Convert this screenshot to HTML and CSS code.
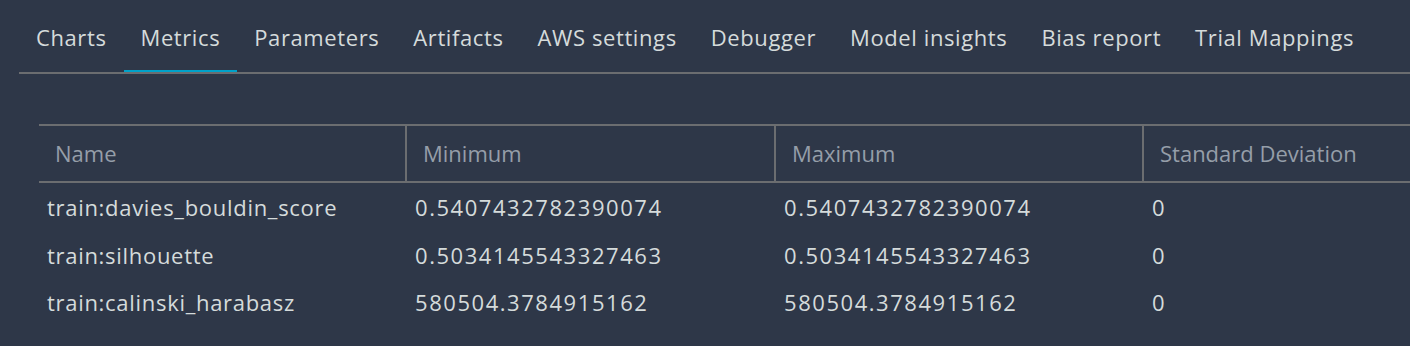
FILE: index.html
```html
<!DOCTYPE html>
<html lang="en">
<head>
  <meta charset="UTF-8">
  <title>Trial details - Metrics</title>
  <link rel="stylesheet" href="styles.css">
</head>
<body>

<div class="tabs">
  <div class="tab">Charts</div>
  <div class="tab active">Metrics</div>
  <div class="tab">Parameters</div>
  <div class="tab">Artifacts</div>
  <div class="tab">AWS settings</div>
  <div class="tab">Debugger</div>
  <div class="tab">Model insights</div>
  <div class="tab">Bias report</div>
  <div class="tab">Trial Mappings</div>
</div>

<div class="table-wrap">
  <table class="metrics">
    <thead>
      <tr>
        <th class="col-name">Name</th>
        <th class="col-min">Minimum</th>
        <th class="col-max">Maximum</th>
        <th class="col-std">Standard Deviation</th>
      </tr>
    </thead>
    <tbody>
      <tr>
        <td>train:davies_bouldin_score</td>
        <td>0.5407432782390074</td>
        <td>0.5407432782390074</td>
        <td>0</td>
      </tr>
      <tr>
        <td>train:silhouette</td>
        <td>0.5034145543327463</td>
        <td>0.5034145543327463</td>
        <td>0</td>
      </tr>
      <tr>
        <td>train:calinski_harabasz</td>
        <td>580504.3784915162</td>
        <td>580504.3784915162</td>
        <td>0</td>
      </tr>
    </tbody>
  </table>
</div>

</body>
</html>
```

FILE: styles.css
```css
* {
  box-sizing: border-box;
}

body {
  margin: 0;
  background-color: #2e3748;
  font-family: "Open Sans", Arial, sans-serif;
  font-size: 22px;
  letter-spacing: 0.7px;
  color: #d5dbdb;
  overflow: hidden;
}

.tabs {
  display: flex;
  margin-left: 19px;
  border-bottom: 2px solid #6b6d70;
}

.tab {
  padding: 23px 17px 19px;
  line-height: 28px;
  letter-spacing: 0.6px;
  white-space: nowrap;
  border-bottom: 2px solid transparent;
}

.tab.active {
  border-bottom-color: #00a1c9;
}

.table-wrap {
  margin-top: 50px;
  margin-left: 39px;
}

.metrics {
  border-collapse: separate;
  border-spacing: 0;
  table-layout: fixed;
  width: 1503px;
}

.metrics th {
  text-align: left;
  font-weight: normal;
  letter-spacing: 0;
  color: #959ea9;
  height: 59px;
  padding: 0 16px 2px;
  border-top: 2px solid #6b6d70;
  border-bottom: 2px solid #6b6d70;
}

.metrics th + th {
  border-left: 2px solid #6b6d70;
}

.metrics td {
  height: 47.5px;
  padding: 1px 8px 0;
  white-space: nowrap;
}

/* numbers are wider in the original font */
.metrics td + td {
  padding-left: 10px;
  letter-spacing: 1.55px;
}

.col-name { width: 366px; }
.col-min { width: 369px; }
.col-max { width: 368px; }
.col-std { width: 400px; }
```
